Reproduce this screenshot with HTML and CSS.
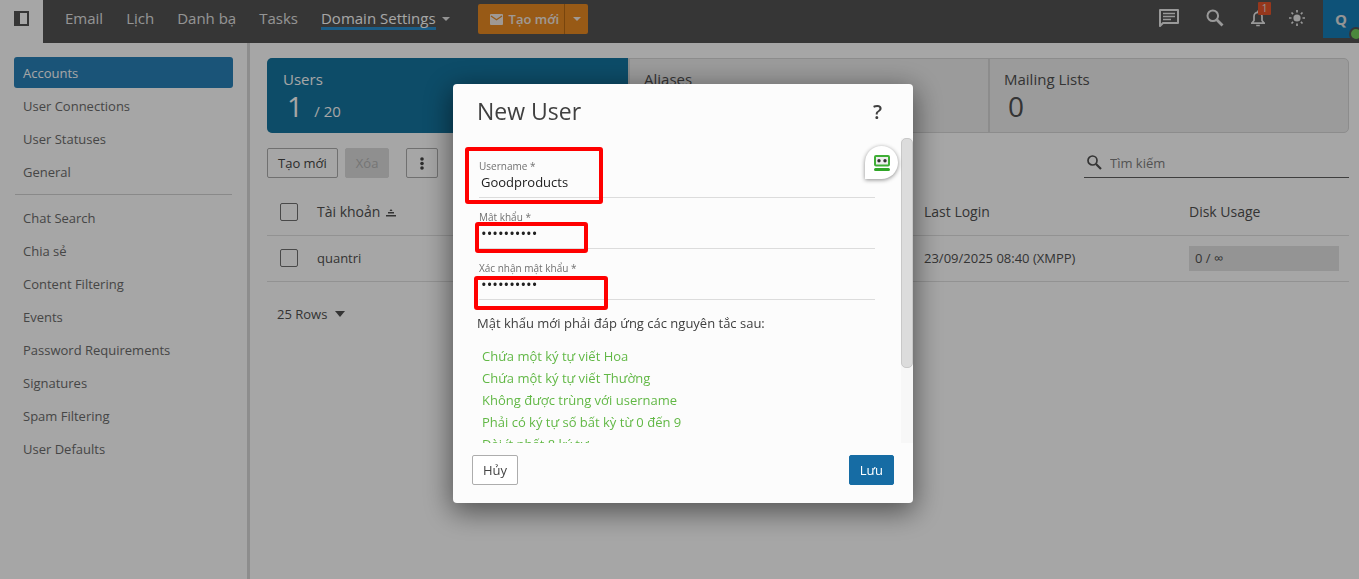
FILE: index.html
```html
<!DOCTYPE html>
<html lang="vi">
    <head>
        <meta charset="UTF-8">
        <meta name="viewport" content="width=device-width, initial-scale=1">
        <title>Domain Settings</title>

        <link rel="stylesheet" href="styles.css">
    </head>
    <body>
        <header class="topbar">
            <button class="sidebar-toggle" aria-label="Sidebar">
                <svg width="15" height="15" viewBox="0 0 15 15"><rect x="1" y="1" width="13" height="13" fill="none" stroke="#535353" stroke-width="2"/><rect x="1" y="1" width="5" height="13" fill="#535353"/></svg>
            </button>
            <nav class="menu">
                <a href="#">Email</a>
                <a href="#">Lịch</a>
                <a href="#">Danh bạ</a>
                <a href="#">Tasks</a>
                <a href="#" class="current">Domain Settings</a>
                <span class="caret"></span>
            </nav>
            <div class="create">
                <button class="create-main">
                    <svg width="13" height="11" viewBox="0 0 13 11"><rect width="13" height="11" rx="1" fill="#f4ece4"/><path d="M1 2l5.500 3.800L12 2" fill="none" stroke="#ea8a22" stroke-width="1.300"/></svg>
                    Tạo mới
                </button>
                <button class="create-more" aria-label="Thêm"><span class="caret"></span></button>
            </div>
            <div class="tools">
                <button class="tool" aria-label="Chat">
                    <svg width="22" height="20" viewBox="0 0 22 20" fill="none" stroke="#ebebeb" stroke-width="2"><path d="M2 18V2h18v13H5z" stroke-linejoin="round"/><path d="M5 5.500h12M5 8.500h12M5 11.500h8" stroke-width="1.700"/></svg>
                </button>
                <button class="tool" aria-label="Search">
                    <svg width="18" height="18" viewBox="0 0 18 18" fill="none" stroke="#ebebeb"><circle cx="6.800" cy="6.800" r="5.300" stroke-width="2"/><path d="M10.800 10.800L16.500 16.500" stroke-width="2.800"/></svg>
                </button>
                <button class="tool bell" aria-label="Notifications">
                    <svg width="16" height="17" viewBox="0 0 16 17" fill="none" stroke="#ebebeb" stroke-width="1.700"><path d="M1 13.200h14M2.800 13V12L4 10.500V6.500C4 4 5.500 2.300 8 2.300S12 4 12 6.500V10.500L13.200 12V13"/><path d="M6.200 15.500h3.600M8 2.500V.5"/></svg>
                    <span class="badge">1</span>
                </button>
                <button class="tool" aria-label="Theme">
                    <svg width="16" height="16" viewBox="0 0 16 16" stroke="#ebebeb" stroke-width="1.700"><circle cx="8" cy="8" r="3.600" fill="#ebebeb" stroke="none"/><path d="M8 0v2.500M8 13.500V16M0 8h2.500M13.500 8H16M2.500 2.500l1.600 1.600M11.900 11.900l1.600 1.600M2.500 13.500l1.600-1.600M11.900 4.100l1.600-1.600"/></svg>
                </button>
                <button class="avatar">Q<span class="status"></span></button>
            </div>
        </header>

        <div class="page">
            <aside class="sidebar">
                <a href="#" class="active">Accounts</a>
                <a href="#">User Connections</a>
                <a href="#">User Statuses</a>
                <a href="#">General</a>
                <hr>
                <a href="#">Chat Search</a>
                <a href="#">Chia sẻ</a>
                <a href="#">Content Filtering</a>
                <a href="#">Events</a>
                <a href="#">Password Requirements</a>
                <a href="#">Signatures</a>
                <a href="#">Spam Filtering</a>
                <a href="#">User Defaults</a>
            </aside>

            <main class="content">
                <div class="cards">
                    <a href="#" class="card selected"><span class="name">Users</span><span class="count">1 <small>/ 20</small></span></a>
                    <a href="#" class="card"><span class="name">Aliases</span><span class="count">0</span></a>
                    <a href="#" class="card"><span class="name">Mailing Lists</span><span class="count">0</span></a>
                </div>

                <div class="toolbar">
                    <button class="btn">Tạo mới</button>
                    <button class="btn" disabled>Xóa</button>
                    <button class="btn dots" aria-label="Thêm">
                        <svg width="4" height="13" viewBox="0 0 4 13" fill="#454545"><circle cx="2" cy="2" r="1.800"/><circle cx="2" cy="6.500" r="1.800"/><circle cx="2" cy="11" r="1.800"/></svg>
                    </button>
                    <label class="search">
                        <svg width="15" height="15" viewBox="0 0 15 15" fill="none" stroke="#505050"><circle cx="5.500" cy="5.500" r="4.500" stroke-width="1.700"/><path d="M9 9l5 5" stroke-width="2.200"/></svg>
                        <input type="text" placeholder="Tìm kiếm" aria-label="Tìm kiếm">
                    </label>
                </div>

                <table class="accounts">
                    <thead>
                        <tr>
                            <th class="check"><input type="checkbox" aria-label="Chọn tất cả"></th>
                            <th class="account">Tài khoản <svg width="10" height="8" viewBox="0 0 10 8" fill="#505050"><path d="M3.500 2L5 0l1.500 2zM2 3h6v1.500H2zM0 6h10v1.500H0z"/></svg></th>
                            <th class="login">Last Login</th>
                            <th class="disk">Disk Usage</th>
                        </tr>
                    </thead>
                    <tbody>
                        <tr>
                            <td><input type="checkbox" aria-label="quantri"></td>
                            <td>quantri</td>
                            <td>23/09/2025 08:40 (XMPP)</td>
                            <td><div class="usage">0 / ∞</div></td>
                        </tr>
                    </tbody>
                </table>

                <button class="rows">25 Rows <span class="caret dark"></span></button>
            </main>
        </div>

        <div class="overlay">
            <form class="dialog" role="dialog" aria-labelledby="dialog-title">
                <div class="dialog-head">
                    <h1 id="dialog-title">New User</h1>
                    <button type="button" class="help">?</button>
                </div>
                <div class="dialog-main">
                    <div class="dialog-body">
                        <div class="field">
                            <label for="username">Username *</label>
                            <input type="text" id="username" value="Goodproducts">
                            <span class="mark mark-user"></span>
                        </div>
                        <div class="field">
                            <label for="password">Mật khẩu *</label>
                            <input type="password" id="password" value="Abcdefg123">
                            <span class="mark mark-pass"></span>
                        </div>
                        <div class="field">
                            <label for="confirm">Xác nhận mật khẩu *</label>
                            <input type="password" id="confirm" value="Abcdefg123">
                            <span class="mark mark-confirm"></span>
                        </div>
                        <p>Mật khẩu mới phải đáp ứng các nguyên tắc sau:</p>
                        <ul>
                            <li>Chứa một ký tự viết Hoa</li>
                            <li>Chứa một ký tự viết Thường</li>
                            <li>Không được trùng với username</li>
                            <li>Phải có ký tự số bất kỳ từ 0 đến 9</li>
                            <li>Dài ít nhất 8 ký tự</li>
                        </ul>
                    </div>
                    <div class="scrollbar"><div class="thumb"></div></div>
                    <span class="filler">
                        <svg width="16" height="16" viewBox="0 0 16 16"><rect x="1" y="1" width="14" height="9.500" rx="1" fill="#eee" stroke="#3faf36" stroke-width="2"/><circle cx="5" cy="5.700" r="1.700" fill="#333"/><circle cx="11" cy="5.700" r="1.700" fill="#333"/><rect y="13" width="16" height="3" rx="1.500" fill="#2fa526"/></svg>
                    </span>
                </div>
                <div class="dialog-foot">
                    <button type="button" class="btn">Hủy</button>
                    <button type="button" class="btn primary">Lưu</button>
                </div>
            </form>
        </div>
    </body>
</html>
```
FILE: styles.css
```css
*
{
    box-sizing: border-box;
}

body
{
    margin: 0;
    min-height: 100vh;
    display: flex;
    flex-direction: column;
    background-color: #fff;
    color: #505050;
    font-family: "Open Sans", "Noto Sans", sans-serif;
    font-size: 13px;
    overflow: hidden;
}

a
{
    color: inherit;
    text-decoration: none;
}

button, input
{
    font: inherit;
    color: inherit;
}

button
{
    border: none;
    background: none;
    padding: 0;
}

svg
{
    display: block;
}

/* top bar */
.topbar
{
    display: flex;
    height: 43px;
    background-color: #535353;
    color: #e4e4e4;
}

.sidebar-toggle
{
    width: 43px;
    background-color: #fff;
    display: flex;
    align-items: center;
    padding: 0 14px 6px;
}

.menu
{
    display: flex;
    align-items: center;
    gap: 23px;
    padding: 0 0 8px 22px;
    font-size: 15px;
}

.menu .current
{
    color: #fff;
    line-height: 18px;
    border-bottom: 3px solid #2a8fd0;
    margin-top: 3px;
}

.menu .caret
{
    margin: 3px 0 0 -17px;
}

.caret
{
    border: 4px solid transparent;
    border-top-color: currentColor;
    border-bottom: none;
}

.caret.dark
{
    border-width: 6px 5px 0;
}

.create
{
    display: flex;
    height: 30px;
    margin: 4px 0 0 28px;
    background-color: #ea8a22;
    border-radius: 2px;
    color: #f4ece4;
    font-weight: 600;
}

.create-main
{
    display: flex;
    align-items: center;
    gap: 6px;
    padding: 0 5px 0 12px;
}

.create-more
{
    display: flex;
    align-items: center;
    justify-content: center;
    width: 24px;
    border-left: 1px solid #b86a14;
}

.tools
{
    display: flex;
    align-items: center;
    margin-left: auto;
    height: 36px;
}

.tool
{
    margin-right: 26px;
}

.bell
{
    position: relative;
    margin-right: 23px;
}

.badge
{
    position: absolute;
    left: 8px;
    top: -8px;
    width: 13px;
    height: 13px;
    border-radius: 1px;
    background-color: #e7552b;
    font-size: 10px;
    line-height: 13px;
}

.avatar
{
    position: relative;
    align-self: flex-start;
    width: 36px;
    height: 38px;
    margin-left: -8px;
    background-color: #167eb8;
    font-size: 15px;
    font-weight: 700;
}

.status
{
    position: absolute;
    left: 26px;
    bottom: -3px;
    width: 14px;
    height: 14px;
    border: 2px solid #535353;
    border-radius: 50%;
    background-color: #73d05c;
}

/* layout */
.page
{
    flex: 1;
    display: flex;
}

.sidebar
{
    flex: none;
    width: 250px;
    padding: 14px 14px 0;
    border-right: 3px solid #d9d9d9;
    color: #6c6c6c;
}

.sidebar a
{
    display: block;
    line-height: 29px;
    margin-bottom: 2px;
    padding: 2px 9px 0;
    border-radius: 3px;
}

.sidebar .active
{
    background-color: #2981b9;
    color: #fff;
}

.sidebar hr
{
    height: 1px;
    margin: 7px 1px;
    border: none;
    background-color: #d3d3d3;
}

.content
{
    flex: 1;
    padding: 15px 10px 0 17px;
}

.cards
{
    display: grid;
    grid-template-columns: repeat(3, 1fr);
    grid-template-rows: 73px;
    border: 1px solid #d8d8d8;
    border-radius: 5px;
    background-color: #eee;
}

.card
{
    display: flex;
    flex-direction: column;
    padding: 10px 14px 0;
    border-left: 2px solid #d8d8d8;
}

.card.selected
{
    margin: -1px 0 -1px -1px;
    padding: 11px 16px 0;
    border: none;
    border-radius: 5px 0 0 5px;
    background-color: #1475a0;
    color: #fff;
}

.card .name
{
    font-size: 15px;
    line-height: 20px;
}

.card .count
{
    padding-left: 4px;
    font-size: 28px;
    line-height: 34px;
}

.card small
{
    font-size: 15px;
    line-height: 20px;
    margin-left: 4px;
}

.toolbar
{
    display: flex;
    margin-top: 15px;
}

.btn
{
    height: 30px;
    padding: 0 10px;
    border: 1px solid #adadad;
    border-radius: 2px;
    background-color: #fff;
    color: #454545;
}

.btn:disabled
{
    margin-left: 7px;
    border-color: #dcdcdc;
    background-color: #dcdcdc;
    color: #b4b4b4;
}

.btn.dots
{
    width: 32px;
    margin-left: 17px;
    padding: 0 13px;
}

.search
{
    display: flex;
    align-items: center;
    gap: 8px;
    width: 265px;
    margin-left: auto;
    padding-left: 3px;
    border-bottom: 1px solid #606060;
}

.search input
{
    flex: 1;
    min-width: 0;
    border: none;
    background: none;
    padding: 0;
}

.search input::placeholder
{
    color: #808080;
    opacity: 1;
}

/* table */
.accounts
{
    width: 100%;
    margin-top: 11px;
    border-collapse: collapse;
    table-layout: fixed;
}

.accounts th, .accounts td
{
    height: 46px;
    padding: 0;
    border-bottom: 1px solid #e0e0e0;
    text-align: left;
}

.accounts th
{
    font-size: 14px;
    font-weight: 400;
}

.accounts th svg
{
    display: inline-block;
    margin-left: 2px;
}

.accounts input
{
    appearance: none;
    display: block;
    width: 18px;
    height: 18px;
    margin: 0 0 0 13px;
    border: 1px solid #707070;
    border-radius: 2px;
}

.check
{
    width: 50px;
}

.login
{
    width: 265px;
}

.disk
{
    width: 160px;
}

.usage
{
    margin-right: 10px;
    padding-left: 6px;
    line-height: 25px;
    background-color: #e4e4e4;
}

.rows
{
    display: flex;
    align-items: center;
    gap: 8px;
    margin: 23px 0 0 10px;
}

/* dialog */
.overlay
{
    position: fixed;
    inset: 0;
    display: flex;
    align-items: center;
    justify-content: center;
    padding: 8px 0 0 7px;
    background-color: rgba(0, 0, 0, 0.35);
}

.dialog
{
    width: 460px;
    border-radius: 4px;
    background-color: #fcfcfc;
    color: #404040;
    box-shadow: 0 7px 28px 2px rgba(0, 0, 0, 0.5);
}

.dialog-head
{
    display: flex;
    align-items: center;
    justify-content: space-between;
    height: 54px;
    padding: 0 31px 0 24px;
}

.dialog-head h1
{
    margin: 0;
    font-size: 23px;
    font-weight: 400;
}

.help
{
    font-size: 20px;
    font-weight: 600;
}

.dialog-main
{
    position: relative;
    display: flex;
    height: 305px;
}

.dialog-body
{
    flex: 1;
    padding: 9px 26px 0 24px;
    overflow: hidden;
}

.field
{
    position: relative;
    display: flex;
    flex-direction: column;
    height: 51px;
    margin-left: 2px;
    padding-top: 12px;
    border-bottom: 1px solid #dcdcdc;
}

.field label
{
    font-size: 10px;
    line-height: 14px;
    color: #707070;
}

.field input
{
    height: 18px;
    padding: 0 2px;
    border: none;
    outline: none;
    background: none;
    color: #202020;
}

.field input[type="password"]
{
    font-size: 15px;
}

/* red frames over the fields */
.mark
{
    position: absolute;
    border: 4px solid #f00;
    border-radius: 3px;
    pointer-events: none;
}

.mark-user
{
    left: -14px;
    top: 0;
    width: 138px;
    height: 57px;
}

.mark-pass
{
    left: -4px;
    top: 24px;
    width: 113px;
    height: 31px;
}

.mark-confirm
{
    left: -5px;
    top: 27px;
    width: 134px;
    height: 34px;
}

.dialog-body p
{
    margin: 13px 0 12px;
    line-height: 20px;
}

.dialog-body ul
{
    margin: 0;
    padding: 0 0 0 5px;
    list-style: none;
    line-height: 22px;
    color: #62b846;
}

.scrollbar
{
    width: 12px;
    background-color: #f7f7f7;
}

.thumb
{
    height: 230px;
    border: 1px solid #c8c8c8;
    border-radius: 5px;
    background-color: #dcdcdc;
}

.filler
{
    position: absolute;
    right: 15px;
    top: 8px;
    display: flex;
    align-items: center;
    justify-content: center;
    width: 33px;
    height: 33px;
    border-radius: 50% 50% 50% 0;
    background-color: #fff;
    box-shadow: 0 1px 4px rgba(0, 0, 0, 0.45);
}

.dialog-foot
{
    display: flex;
    justify-content: space-between;
    padding: 12px 19px 18px;
}

.btn.primary
{
    border-color: #166ca4;
    background-color: #166ca4;
    color: #fff;
}
```
